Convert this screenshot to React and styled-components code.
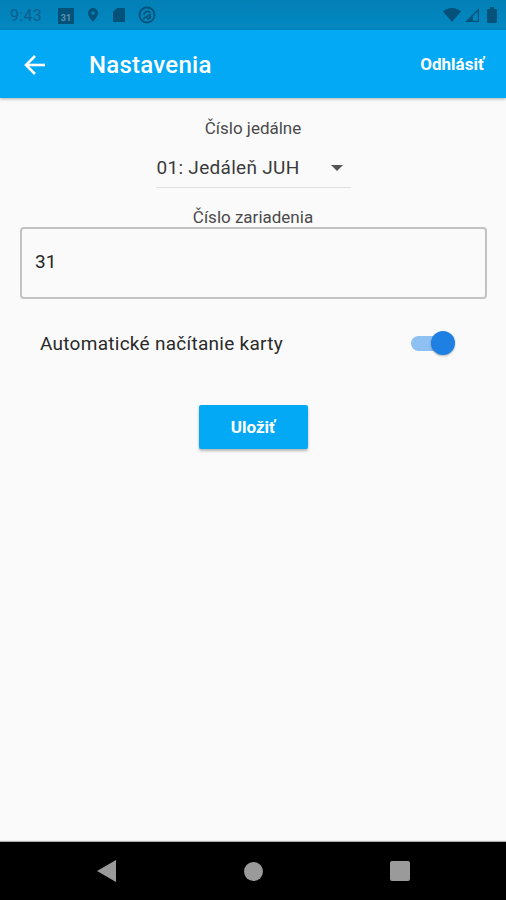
import React from "react";
import styled, { createGlobalStyle } from "styled-components";

const GlobalStyle = createGlobalStyle`
  html, body {
    margin: 0;
    padding: 0;
    background: #fafafa;
    font-family: Roboto, "Liberation Sans", sans-serif;
  }
`;

const Screen = styled.div`
  display: flex;
  flex-direction: column;
  width: 506px;
  height: 900px;
  overflow: hidden;
`;

const StatusBar = styled.div`
  display: flex;
  align-items: center;
  justify-content: space-between;
  flex: 0 0 30px;
  padding: 0 9px 0 10px;
  background: linear-gradient(#0280b6, #0288c2);
  color: #04527a;
  box-sizing: border-box;
`;

const StatusGroup = styled.div`
  display: flex;
  align-items: center;
  gap: ${props => props.gap}px;
`;

const Clock = styled.span`
  width: 36px;
  font-size: 16px;
  letter-spacing: 0.3px;
  color: #0a5f8a;
`;

const CalendarDay = styled.text`
  font-size: 9px;
  font-weight: 700;
  fill: #5d93ad;
`;

const BatteryIcon = styled.svg`
  margin-left: 4px;
`;

const AppBar = styled.div`
  display: flex;
  align-items: center;
  flex: 0 0 68px;
  padding-top: 2px;
  box-sizing: border-box;
  background: #03a9f4;
  color: #fff;
  box-shadow: 0 1px 3px rgba(0, 0, 0, 0.3);
  position: relative;
`;

const BackButton = styled.div`
  display: flex;
  width: 22px;
  margin-left: 24px;
`;

const Title = styled.div`
  margin-left: 43px;
  flex: 1;
  font-size: 24px;
  font-weight: 500;
  letter-spacing: 0.25px;
`;

const LogoutLabel = styled.div`
  margin: 0 22px 2px 0;
  font-size: 17px;
  font-weight: 700;
`;

const Content = styled.div`
  flex: 1;
  display: flex;
  flex-direction: column;
  align-items: center;
  background: #fafafa;
`;

const FieldLabel = styled.div`
  font-size: 17px;
  line-height: 20px;
  color: #4a4a4a;
  margin-top: ${props => props.top}px;
`;

const Dropdown = styled.div`
  display: flex;
  align-items: center;
  justify-content: space-between;
  box-sizing: border-box;
  width: 195px;
  height: 40px;
  margin-top: 10px;
  padding-left: 1px;
  border-bottom: 1px solid #e2e2e2;
  font-size: 19px;
  letter-spacing: 0.3px;
  color: #3a3a3a;
`;

const Caret = styled.span`
  width: 0;
  height: 0;
  margin: 0 8px 0 0;
  border-left: 6px solid transparent;
  border-right: 6px solid transparent;
  border-top: 6px solid #555;
`;

const TextField = styled.div`
  display: flex;
  align-items: center;
  box-sizing: border-box;
  align-self: flex-start;
  width: 467px;
  height: 72px;
  margin: 0 0 0 20px;
  padding: 0 0 3px 13px;
  border: 2px solid #c2c2c2;
  border-radius: 4px;
  font-size: 19px;
  color: #262626;
`;

const SwitchRow = styled.div`
  display: flex;
  align-items: center;
  justify-content: space-between;
  box-sizing: border-box;
  width: 100%;
  height: 26px;
  margin-top: 31px;
  padding: 0 61px 0 40px;
  font-size: 19px;
  letter-spacing: 0.27px;
  color: #2a2a2a;
`;

const SwitchTrack = styled.div`
  position: relative;
  width: 34px;
  height: 15px;
  border-radius: 8px;
  background: #8ec0f1;
`;

const SwitchThumb = styled.div`
  position: absolute;
  right: -10px;
  top: -5px;
  width: 24px;
  height: 24px;
  border-radius: 50%;
  background: #1e80e3;
  box-shadow: 0 1px 2px rgba(0, 0, 0, 0.3);
`;

const SaveButton = styled.div`
  display: flex;
  align-items: center;
  justify-content: center;
  width: 109px;
  height: 44px;
  margin-top: 49px;
  border-radius: 2px;
  background: #03a9f4;
  color: #fff;
  font-size: 17px;
  font-weight: 700;
  box-shadow: 0 2px 3px rgba(0, 0, 0, 0.28);
`;

const NavBar = styled.div`
  display: flex;
  align-items: center;
  flex: 0 0 58px;
  background: #000;
  position: relative;
  box-shadow: 0 -1px 1px rgba(0, 0, 0, 0.3);
  padding-left: 97px;
  gap: 127.5px;
`;

const NavIcon = styled.svg`
  display: block;
  flex: none;
`;

const App = () => (
  <Screen>
    <GlobalStyle />
    <StatusBar>
      <StatusGroup gap={12}>
        <Clock>9:43</Clock>
        <svg width="16" height="17" viewBox="0 0 16 17" fill="currentColor">
          <path d="M0 1h16v16H0z" />
          <CalendarDay x="8" y="14" textAnchor="middle">31</CalendarDay>
        </svg>
        <svg width="14" height="16" viewBox="0 0 14 16" fill="currentColor">
          <path fillRule="evenodd" d="M7 1a5 5 0 0 0-5 5c0 3.600 5 9 5 9s5-5.400 5-9a5 5 0 0 0-5-5zm0 6.800a1.800 1.800 0 1 1 0-3.600 1.800 1.800 0 0 1 0 3.600z" />
        </svg>
        <svg width="14" height="16" viewBox="0 0 14 16" fill="currentColor">
          <path d="M5 1h7a1 1 0 0 1 1 1v12a1 1 0 0 1-1 1H2a1 1 0 0 1-1-1V5z" />
        </svg>
        <svg width="18" height="18" viewBox="0 0 18 18" fill="none" stroke="currentColor" strokeWidth="1.800">
          <circle cx="9" cy="9" r="7.500" />
          <path d="M5 13l8-5" />
          <path d="M6 9a3.500 3.500 0 0 1 6-2.500" />
          <path d="M9 13a3.500 3.500 0 0 0 3.500-3" />
        </svg>
      </StatusGroup>
      <StatusGroup gap={4}>
        <svg width="18" height="14" viewBox="0 0 18 14" fill="currentColor">
          <path d="M0 3.500C2.300 1.300 5.500 0 9 0s6.700 1.300 9 3.500L9 14z" />
        </svg>
        <svg width="14" height="14" viewBox="0 0 14 14" fill="currentColor">
          <path fillRule="evenodd" d="M14 0v14H0zM12.800 3.200 3.200 12.800h9.600z" />
          <path d="M8 8v5H3z" />
        </svg>
        <BatteryIcon width="10" height="16" viewBox="0 0 10 16" fill="currentColor">
          <path d="M3 0h4v2h2a1 1 0 0 1 1 1v12a1 1 0 0 1-1 1H1a1 1 0 0 1-1-1V3a1 1 0 0 1 1-1h2z" />
        </BatteryIcon>
      </StatusGroup>
    </StatusBar>
    <AppBar>
      <BackButton>
        <svg width="22" height="22" viewBox="0 0 22 22" fill="none" stroke="#fff" strokeWidth="2.600">
          <path d="M21 11H3" />
          <path d="M11 2l-9 9 9 9" />
        </svg>
      </BackButton>
      <Title>Nastavenia</Title>
      <LogoutLabel>Odhlásiť</LogoutLabel>
    </AppBar>
    <Content>
      <FieldLabel top={20}>Číslo jedálne</FieldLabel>
      <Dropdown>
        01: Jedáleň JUH
        <Caret />
      </Dropdown>
      <FieldLabel top={19}>Číslo zariadenia</FieldLabel>
      <TextField>31</TextField>
      <SwitchRow>
        Automatické načítanie karty
        <SwitchTrack>
          <SwitchThumb />
        </SwitchTrack>
      </SwitchRow>
      <SaveButton>Uložiť</SaveButton>
    </Content>
    <NavBar>
      <NavIcon width="19" height="22" viewBox="0 0 19 22" fill="#9a9a9a">
        <path d="M19 0v22L0 11z" />
      </NavIcon>
      <NavIcon width="19" height="19" viewBox="0 0 19 19" fill="#9a9a9a">
        <circle cx="9.500" cy="9.500" r="9.500" />
      </NavIcon>
      <NavIcon width="20" height="20" viewBox="0 0 20 20" fill="#9a9a9a">
        <rect width="20" height="20" rx="2" />
      </NavIcon>
    </NavBar>
  </Screen>
);

export default App;
